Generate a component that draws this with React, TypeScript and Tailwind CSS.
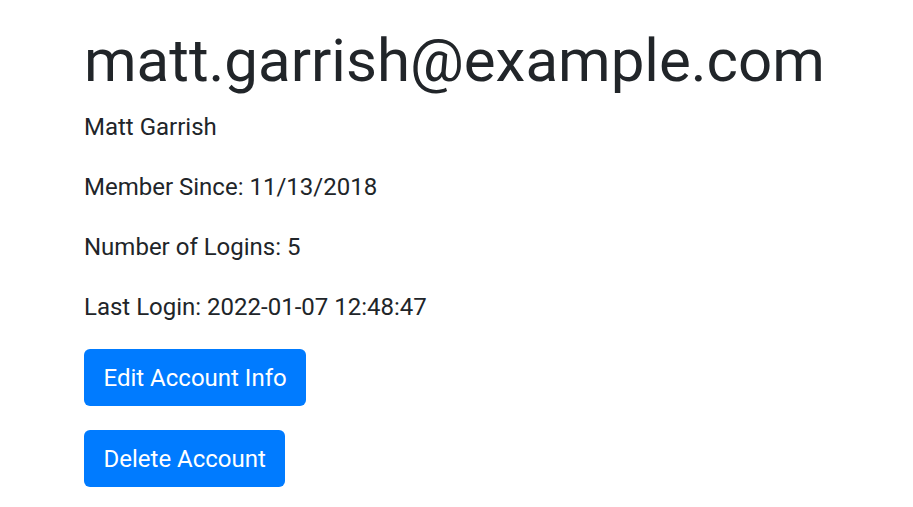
import React from 'react';

const info = [
  'Matt Garrish',
  'Member Since: 11/13/2018',
  'Number of Logins: 5',
  'Last Login: 2022-01-07 12:48:47',
];

export default function App() {
  return (
    <div className="min-h-screen bg-white text-[#212529] font-['Roboto',sans-serif]">
      <div className="pl-[84px] pt-[25px]">
        <h1 className="text-[60px] leading-[72px] font-normal mb-[12px]">matt.garrish@example.com</h1>
        {info.map((line) => (
          <p key={line} className="text-[24px] leading-[36px] mb-[24px]">
            {line}
          </p>
        ))}
        <div className="flex flex-col items-start gap-[24px]">
          <button className="bg-[#007bff] text-white text-[24px] leading-[36px] px-[19.5px] h-[57px] rounded-[6px]">
            Edit Account Info
          </button>
          <button className="bg-[#007bff] text-white text-[24px] leading-[36px] px-[19.5px] h-[57px] rounded-[6px]">
            Delete Account
          </button>
        </div>
      </div>
    </div>
  );
}
